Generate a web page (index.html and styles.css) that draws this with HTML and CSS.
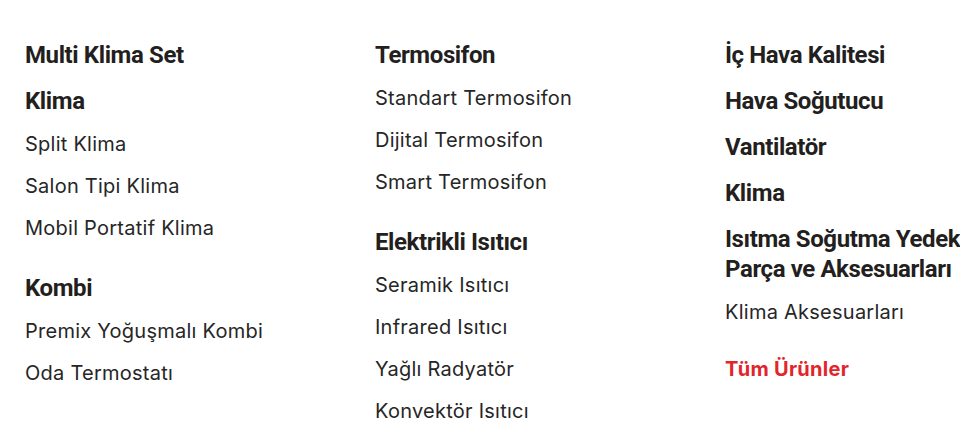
FILE: index.html
```html
<!DOCTYPE html>
<html lang="tr">
<head>
<meta charset="utf-8">
<link rel="stylesheet" href="styles.css">
</head>
<body>
<nav class="menu">
  <div class="col">
    <div class="group"><a class="title" href="#">Multi Klima Set</a></div>
    <div class="group">
      <a class="title" href="#">Klima</a>
      <ul class="links">
        <li><a href="#">Split Klima</a></li>
        <li><a href="#">Salon Tipi Klima</a></li>
        <li><a href="#">Mobil Portatif Klima</a></li>
      </ul>
    </div>
    <div class="group">
      <a class="title" href="#">Kombi</a>
      <ul class="links">
        <li><a href="#">Premix Yoğuşmalı Kombi</a></li>
        <li><a href="#">Oda Termostatı</a></li>
      </ul>
    </div>
  </div>
  <div class="col">
    <div class="group">
      <a class="title" href="#">Termosifon</a>
      <ul class="links">
        <li><a href="#">Standart Termosifon</a></li>
        <li><a href="#">Dijital Termosifon</a></li>
        <li><a href="#">Smart Termosifon</a></li>
      </ul>
    </div>
    <div class="group">
      <a class="title" href="#">Elektrikli Isıtıcı</a>
      <ul class="links">
        <li><a href="#">Seramik Isıtıcı</a></li>
        <li><a href="#">Infrared Isıtıcı</a></li>
        <li><a href="#">Yağlı Radyatör</a></li>
        <li><a href="#">Konvektör Isıtıcı</a></li>
      </ul>
    </div>
  </div>
  <div class="col">
    <div class="group"><a class="title" href="#">İç Hava Kalitesi</a></div>
    <div class="group"><a class="title" href="#">Hava Soğutucu</a></div>
    <div class="group"><a class="title" href="#">Vantilatör</a></div>
    <div class="group"><a class="title" href="#">Klima</a></div>
    <div class="group">
      <a class="title" href="#">Isıtma Soğutma Yedek Parça ve Aksesuarları</a>
      <ul class="links">
        <li><a href="#">Klima Aksesuarları</a></li>
      </ul>
    </div>
    <div class="group"><a class="all" href="#">Tüm Ürünler</a></div>
  </div>
</nav>
</body>
</html>
```

FILE: styles.css
```css
* { box-sizing: border-box; }
html, body { margin: 0; padding: 0; background: #fff; }
body { font-family: "Inter", "Noto Sans", sans-serif; color: #231f20; overflow-x: hidden; }
a { color: inherit; text-decoration: none; }

.menu {
  display: grid;
  grid-template-columns: 350px 350px 245px;
  padding: 40px 0 0 25px;
}

.group { margin-bottom: 16px; }
.group:last-child { margin-bottom: 0; }

.title {
  display: block;
  font-family: "Roboto", "Liberation Sans", sans-serif;
  font-weight: 700;
  font-size: 24px;
  line-height: 30px;
  color: #231f20;
  letter-spacing: -0.4px;
}

.links {
  list-style: none;
  margin: 7px 0 0;
  padding: 0 0 8px;
}
.group:last-child .links { padding-bottom: 0; }
.links li {
  font-size: 20px;
  line-height: 42px;
  letter-spacing: 0.25px;
  color: #262626;
}

.all {
  display: block;
  font-weight: 700;
  font-size: 20px;
  line-height: 24px;
  letter-spacing: 0.3px;
  color: #e2252b;
}
```
